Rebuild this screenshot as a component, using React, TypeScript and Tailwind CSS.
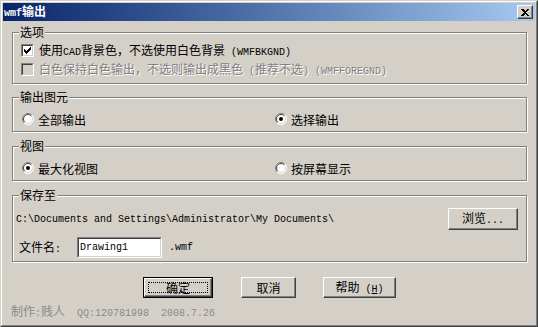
import React from 'react';

const Mono = ({ children, className = '' }: { children: React.ReactNode; className?: string }) => (
  <span className={`font-['Liberation_Mono',monospace] text-[10px] whitespace-pre ${className}`}>{children}</span>
);

const CheckBox = ({ checked, disabled }: { checked?: boolean; disabled?: boolean }) => (
  <div className="w-[13px] h-[13px] border border-t-[#808080] border-l-[#808080] border-r-white border-b-white shrink-0">
    <div
      className={`w-full h-full border border-t-[#404040] border-l-[#404040] border-r-[#d4d0c8] border-b-[#d4d0c8] flex items-center justify-center ${
        disabled ? 'bg-[#d4d0c8]' : 'bg-white'
      }`}
    >
      {checked && (
        <svg width="7" height="7" viewBox="0 0 7 7" shapeRendering="crispEdges">
          <rect x="0" y="2" width="1" height="3" fill="#000" />
          <rect x="1" y="3" width="1" height="3" fill="#000" />
          <rect x="2" y="4" width="1" height="3" fill="#000" />
          <rect x="3" y="3" width="1" height="3" fill="#000" />
          <rect x="4" y="2" width="1" height="3" fill="#000" />
          <rect x="5" y="1" width="1" height="3" fill="#000" />
          <rect x="6" y="0" width="1" height="3" fill="#000" />
        </svg>
      )}
    </div>
  </div>
);

const Radio = ({ checked }: { checked?: boolean }) => (
  <svg width="12" height="12" viewBox="0 0 12 12" className="shrink-0">
    <circle cx="6" cy="6" r="5.5" fill="#fff" />
    <path d="M2.1 9.9 A5.5 5.5 0 0 1 9.9 2.1" fill="none" stroke="#808080" strokeWidth="1" />
    <path d="M9.9 2.1 A5.5 5.5 0 0 1 2.1 9.9" fill="none" stroke="#fff" strokeWidth="1" />
    <path d="M2.8 9.2 A4.5 4.5 0 0 1 9.2 2.8" fill="none" stroke="#404040" strokeWidth="1" />
    <path d="M9.2 2.8 A4.5 4.5 0 0 1 2.8 9.2" fill="none" stroke="#d4d0c8" strokeWidth="1" />
    {checked && <circle cx="6" cy="6" r="2" fill="#000" />}
  </svg>
);

const Group = ({ label, className, children }: { label: string; className: string; children: React.ReactNode }) => (
  <div
    className={`relative ml-[9px] w-[515px] border border-[#808080] shadow-[inset_1px_1px_0_#fff,1px_1px_0_#fff] ${className}`}
  >
    <span className="absolute left-[6px] -top-[8px] px-px bg-[#d4d0c8] leading-[14px]">{label}</span>
    {children}
  </div>
);

const Button = ({
  children,
  className = '',
  isDefault,
}: {
  children: React.ReactNode;
  className?: string;
  isDefault?: boolean;
}) => {
  const face = (
    <div className="w-full h-full border border-t-white border-l-white border-r-[#404040] border-b-[#404040] shadow-[inset_-1px_-1px_0_#808080] flex items-center justify-center bg-[#d4d0c8]">
      {isDefault ? (
        <div className="w-[calc(100%-6px)] h-[calc(100%-6px)] border border-dotted border-black flex items-center justify-center leading-none">
          {children}
        </div>
      ) : (
        <span className="leading-none">{children}</span>
      )}
    </div>
  );
  return isDefault ? (
    <div className={`border border-black ${className}`}>{face}</div>
  ) : (
    <div className={className}>{face}</div>
  );
};

export default function App() {
  return (
    <div className="w-[538px] h-[327px] bg-[#d4d0c8] border border-t-[#d4d0c8] border-l-[#d4d0c8] border-r-[#404040] border-b-[#404040] font-['Noto_Sans_CJK_SC',sans-serif] text-[12px] text-black">
      <div className="h-full border border-t-white border-l-white border-r-[#808080] border-b-[#808080] p-px flex flex-col">
        {/* title bar */}
        <div className="h-[18px] bg-linear-to-r from-[#0a246a] to-[#a6caf0] flex items-center justify-between pl-[1px] pr-[2px] shrink-0">
          <span className="text-white font-bold leading-none">
            <Mono className="font-bold">wmf</Mono>输出
          </span>
          <div className="w-[16px] h-[14px] border border-t-white border-l-white border-r-[#404040] border-b-[#404040] shadow-[inset_-1px_-1px_0_#808080] bg-[#d4d0c8] flex items-center justify-center">
            <svg width="8" height="7" viewBox="0 0 8 7" shapeRendering="crispEdges">
              <path d="M0 0h2l2 2 2-2h2L5 3.5 8 7H6L4 5 2 7H0l3-3.5z" fill="#000" />
            </svg>
          </div>
        </div>

        <Group label="选项" className="mt-[11px] h-[52px] pt-[11px] pl-[8px]">
          <div className="flex items-center h-[13px] gap-[5px]">
            <CheckBox checked />
            <span className="leading-[13px] whitespace-pre">
              使用<Mono>CAD</Mono>背景色，不选使用白色背景<Mono> (WMFBKGND)</Mono>
            </span>
          </div>
          <div className="flex items-center h-[13px] gap-[5px] mt-[6px] text-[#808080] [text-shadow:1px_1px_0_#fff]">
            <CheckBox disabled />
            <span className="leading-[13px] whitespace-pre">
              白色保持白色输出，不选则输出成黑色<Mono> (</Mono>推荐不选<Mono>) (WMFFOREGND)</Mono>
            </span>
          </div>
        </Group>

        <Group label="输出图元" className="mt-[13px] h-[35px] pt-[15px] pl-[9px]">
          <div className="flex items-center h-[12px]">
            <div className="flex items-center gap-[4px] w-[253px]">
              <Radio />
              <span className="leading-[13px]">全部输出</span>
            </div>
            <div className="flex items-center gap-[4px]">
              <Radio checked />
              <span className="leading-[13px]">选择输出</span>
            </div>
          </div>
        </Group>

        <Group label="视图" className="mt-[14px] h-[35px] pt-[15px] pl-[9px]">
          <div className="flex items-center h-[12px]">
            <div className="flex items-center gap-[4px] w-[253px]">
              <Radio checked />
              <span className="leading-[13px]">最大化视图</span>
            </div>
            <div className="flex items-center gap-[4px]">
              <Radio />
              <span className="leading-[13px]">按屏幕显示</span>
            </div>
          </div>
        </Group>

        <Group label="保存至" className="mt-[14px] h-[67px] pt-[12px]">
          <div className="flex items-center justify-between h-[22px] pl-[3px] pr-[8px]">
            <Mono>C:\Documents and Settings\Administrator\My Documents\</Mono>
            <Button className="w-[70px] h-[22px]">
              浏览<Mono>...</Mono>
            </Button>
          </div>
          <div className="flex items-center h-[21px] mt-[7px] pl-[6px]">
            <span className="w-[58px] leading-[13px]">
              文件名<Mono>:</Mono>
            </span>
            <div className="w-[85px] h-[21px] border border-t-[#808080] border-l-[#808080] border-r-white border-b-white">
              <div className="w-full h-full border border-t-[#404040] border-l-[#404040] border-r-[#d4d0c8] border-b-[#d4d0c8] bg-white flex items-center pl-[1px]">
                <Mono>Drawing1</Mono>
              </div>
            </div>
            <Mono className="ml-[7px]">.wmf</Mono>
          </div>
        </Group>

        <div className="flex items-center h-[21px] mt-[15px]">
          <Button isDefault className="ml-[140px] w-[70px] h-[21px]">
            确定
          </Button>
          <Button className="ml-[28px] w-[55px] h-[21px]">取消</Button>
          <Button className="ml-[27px] w-[73px] h-[21px]">
            帮助<Mono> (</Mono>
            <span className="underline">
              <Mono>H</Mono>
            </span>
            <Mono>)</Mono>
          </Button>
        </div>

        <div className="mt-[6px] pl-[8px] leading-[14px] text-[#8a8a8a] whitespace-pre">
          制作<Mono>:</Mono>贱人<Mono>  QQ:120781998  2008.7.26</Mono>
        </div>
      </div>
    </div>
  );
}
